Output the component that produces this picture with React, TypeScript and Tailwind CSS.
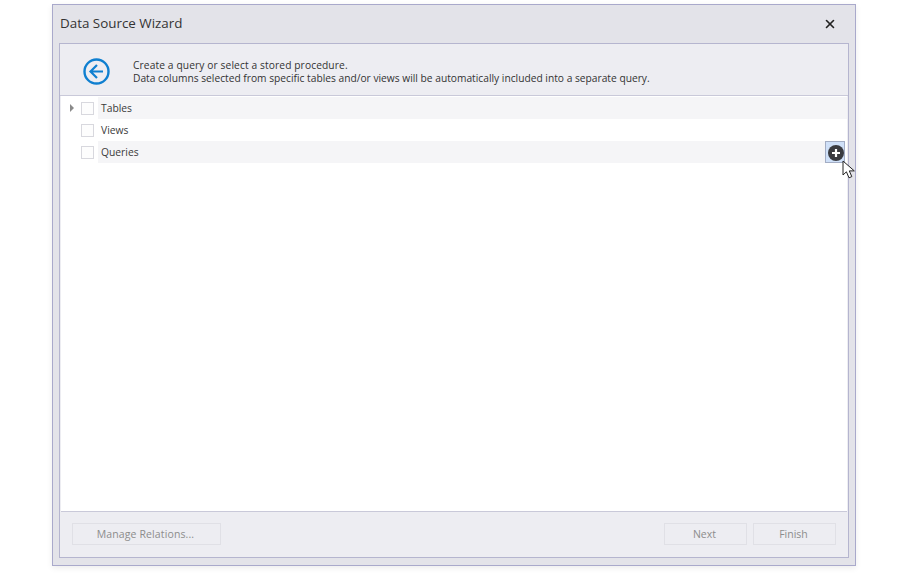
import { X } from 'lucide-react';

const font = { fontFamily: '"Open Sans", sans-serif' };

const Row = ({ label, striped, arrow, add }: { label: string; striped?: boolean; arrow?: boolean; add?: boolean }) => (
    <div className={`flex h-[22px] items-center ${add ? 'mr-[2px]' : ''}`}>
        <div className="flex w-[20px] justify-end pr-[7px]">
            {arrow && <div className="h-0 w-0 border-y-[4px] border-l-[4px] border-y-transparent border-l-[#8a8a8a]" />}
        </div>
        <div className="h-[13px] w-[13px] border border-[#d8d8de] bg-[#fdfdfd]" />
        <div className={`ml-[4px] flex h-full flex-1 items-center justify-between pl-[3px] ${striped ? 'bg-[#f5f5f7]' : ''}`}>
            <span className="pt-[2px] text-[10.3px] text-[#3a3a3a]">{label}</span>
            {add && (
                <div className="relative flex h-[22px] w-[20px] items-center justify-end border border-[#a3adc4] bg-[#cfe0f8] pt-px">
                    <svg width="16" height="16" viewBox="0 0 16 16">
                        <circle cx="8" cy="8" r="8" fill="#3a3b40" />
                        <path d="M8 4v8M4 8h8" stroke="#fff" strokeWidth="2.2" />
                    </svg>
                    <svg className="absolute left-[16px] top-[18px] z-10" width="14" height="20" viewBox="0 0 14 20">
                        <path d="M1 1v14l3.4-3.2 2.6 6 2.8-1.2-2.5-5.7h5z" fill="#fff" stroke="#222" strokeWidth="1" />
                    </svg>
                </div>
            )}
        </div>
    </div>
);

const Button = ({ label, width }: { label: string; width: string }) => (
    <div className={`flex h-[22px] items-center justify-center border border-[#e0e0e6] pr-[2px] pt-[2px] text-[10.5px] text-[#8c8c8c] ${width}`}>{label}</div>
);

export default function App() {
    return (
        <div className="h-[574px] w-[908px] bg-white pl-[52px] pt-[4px]" style={font}>
            <div className="flex h-[562px] w-[804px] flex-col border border-[#a9a9cb] bg-[#e3e3e9] px-[6px] pb-[7px] shadow-[0_2px_6px_rgba(0,0,0,0.08)]">
                <div className="flex h-[38px] shrink-0 items-center justify-between pr-[12px]">
                    <span className="pb-[2px] pl-px text-[13.4px] text-[#333]">Data Source Wizard</span>
                    <X className="mb-px h-[14px] w-[14px] text-[#222]" strokeWidth={2.8} />
                </div>
                <div className="flex flex-1 flex-col border border-[#b5b5cf] bg-[#ededf2]">
                    <div className="flex h-[52px] shrink-0 items-center border-b border-[#c9c9d9] pt-[4px]">
                        <svg className="ml-[23px]" width="27" height="27" viewBox="0 0 27 27" fill="none" stroke="#0f7fd0">
                            <circle cx="13.5" cy="13.5" r="12" strokeWidth="2.4" />
                            <path d="M14 7l-6.5 6.5L14 20M8 13.5h12" strokeWidth="2.2" />
                        </svg>
                        <div className="ml-[23px] text-[10.22px] leading-[13px] text-[#333]">
                            <div className="tracking-[0.11px]">Create a query or select a stored procedure.</div>
                            <div>Data columns selected from specific tables and/or views will be automatically included into a separate query.</div>
                        </div>
                    </div>
                    <div className="mx-px flex-1 border-b border-[#c9c9d9] bg-white pt-px">
                        <Row label="Tables" striped arrow />
                        <Row label="Views" />
                        <Row label="Queries" striped add />
                    </div>
                    <div className="flex h-[45px] shrink-0 items-start justify-between px-[12px] pt-[11px]">
                        <Button label="Manage Relations..." width="w-[149px] tracking-[0.12px]" />
                        <div className="flex gap-[6px]">
                            <Button label="Next" width="w-[83px]" />
                            <Button label="Finish" width="w-[83px]" />
                        </div>
                    </div>
                </div>
            </div>
        </div>
    );
}
